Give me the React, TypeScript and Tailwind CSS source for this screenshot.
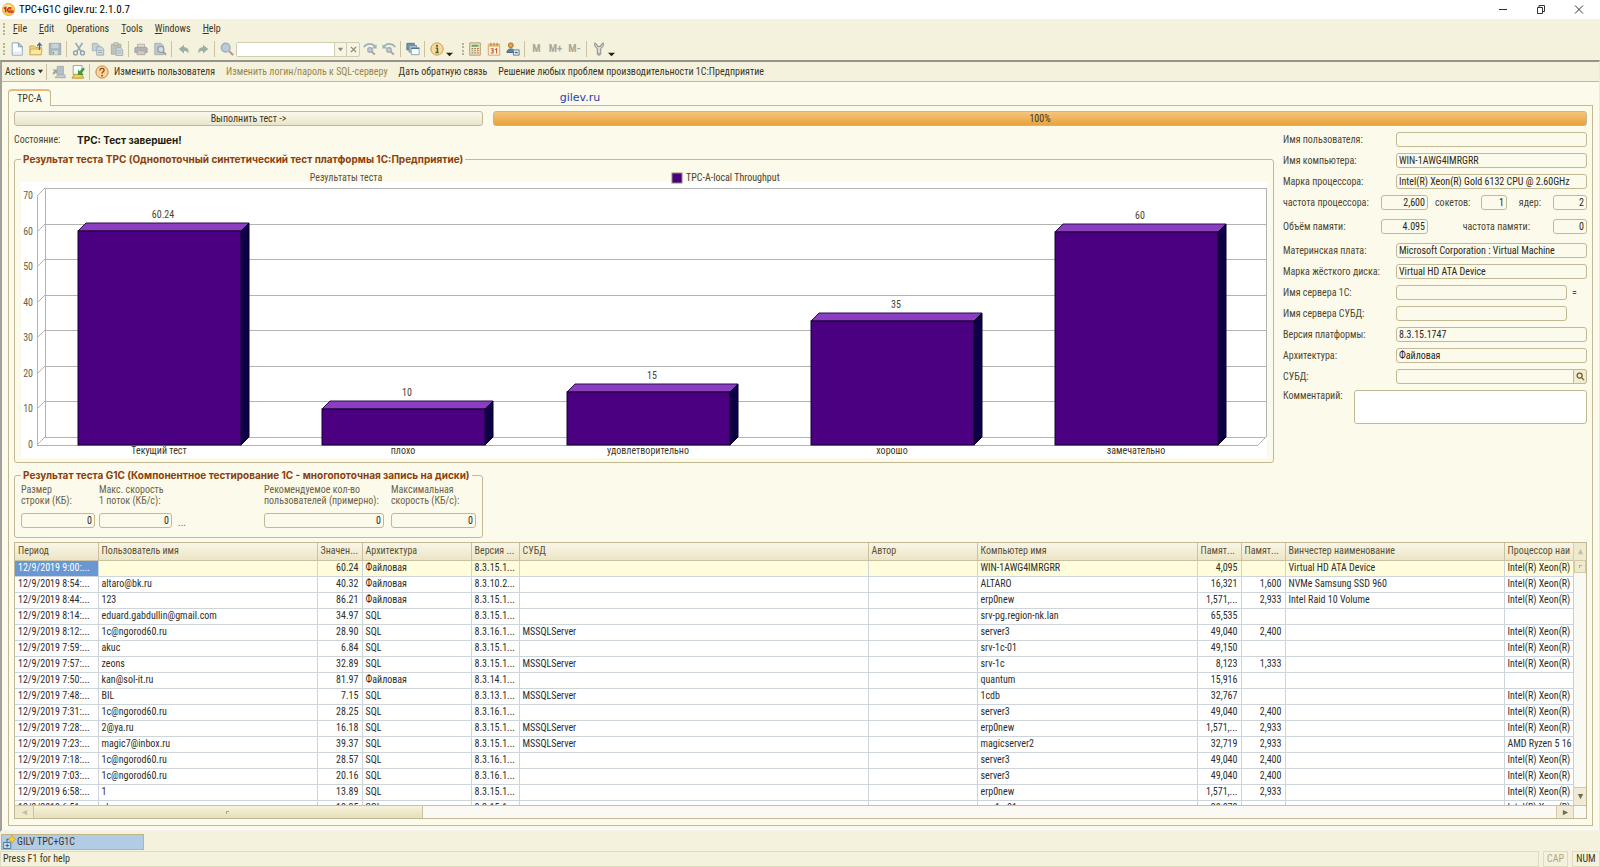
import React from 'react';

interface Bar {
  label: string;
  value: number;
}

interface Row {
  period: string;
  user: string;
  value: string;
  arch: string;
  version: string;
  dbms: string;
  computer: string;
  memory: string;
  memoryFreq: string;
  disk: string;
  cpu: string;
}

const bars: Bar[] = [
  { label: 'Текущий тест', value: 60.24 },
  { label: 'плохо', value: 10 },
  { label: 'удовлетворительно', value: 15 },
  { label: 'хорошо', value: 35 },
  { label: 'замечательно', value: 60 },
];

const ticks = [0, 10, 20, 30, 40, 50, 60, 70];

const XEON = 'Intel(R) Xeon(R)';

const makeRow = (
  period: string, user: string, value: string, arch: string, version: string, dbms: string,
  computer: string, memory: string, memoryFreq: string, disk: string, cpu: string
): Row => ({ period, user, value, arch, version, dbms, computer, memory, memoryFreq, disk, cpu });

const rows: Row[] = [
  makeRow('12/9/2019 9:00:...', '', '60.24', 'Файловая', '8.3.15.1...', '', 'WIN-1AWG4IMRGRR', '4,095', '', 'Virtual HD ATA Device', XEON),
  makeRow('12/9/2019 8:54:...', 'altaro@bk.ru', '40.32', 'Файловая', '8.3.10.2...', '', 'ALTARO', '16,321', '1,600', 'NVMe Samsung SSD 960', XEON),
  makeRow('12/9/2019 8:44:...', '123', '86.21', 'Файловая', '8.3.15.1...', '', 'erp0new', '1,571,...', '2,933', 'Intel Raid 10 Volume', XEON),
  makeRow('12/9/2019 8:14:...', 'eduard.gabdullin@gmail.com', '34.97', 'SQL', '8.3.15.1...', '', 'srv-pg.region-nk.lan', '65,535', '', '', ''),
  makeRow('12/9/2019 8:12:...', '1c@ngorod60.ru', '28.90', 'SQL', '8.3.16.1...', 'MSSQLServer', 'server3', '49,040', '2,400', '', XEON),
  makeRow('12/9/2019 7:59:...', 'akuc', '6.84', 'SQL', '8.3.15.1...', '', 'srv-1c-01', '49,150', '', '', XEON),
  makeRow('12/9/2019 7:57:...', 'zeons', '32.89', 'SQL', '8.3.15.1...', 'MSSQLServer', 'srv-1c', '8,123', '1,333', '', XEON),
  makeRow('12/9/2019 7:50:...', 'kan@sol-it.ru', '81.97', 'Файловая', '8.3.14.1...', '', 'quantum', '15,916', '', '', ''),
  makeRow('12/9/2019 7:48:...', 'BIL', '7.15', 'SQL', '8.3.13.1...', 'MSSQLServer', '1cdb', '32,767', '', '', XEON),
  makeRow('12/9/2019 7:31:...', '1c@ngorod60.ru', '28.25', 'SQL', '8.3.16.1...', '', 'server3', '49,040', '2,400', '', XEON),
  makeRow('12/9/2019 7:28:...', '2@ya.ru', '16.18', 'SQL', '8.3.15.1...', 'MSSQLServer', 'erp0new', '1,571,...', '2,933', '', XEON),
  makeRow('12/9/2019 7:23:...', 'magic7@inbox.ru', '39.37', 'SQL', '8.3.15.1...', 'MSSQLServer', 'magicserver2', '32,719', '2,933', '', 'AMD Ryzen 5 16'),
  makeRow('12/9/2019 7:18:...', '1c@ngorod60.ru', '28.57', 'SQL', '8.3.16.1...', '', 'server3', '49,040', '2,400', '', XEON),
  makeRow('12/9/2019 7:03:...', '1c@ngorod60.ru', '20.16', 'SQL', '8.3.16.1...', '', 'server3', '49,040', '2,400', '', XEON),
  makeRow('12/9/2019 6:58:...', '1', '13.89', 'SQL', '8.3.15.1...', '', 'erp0new', '1,571,...', '2,933', '', XEON),
  makeRow('12/9/2019 6:51:...', 'akuc', '18.35', 'SQL', '8.3.15.1...', '', 'srv-1c-01', '20,878', '', '', XEON),
];

const fieldClass =
  'h-[15px] min-w-0 rounded-[3px] border border-[#c1b993] bg-[#fcfaeb] px-[2px] text-[#2b2718] outline-none';

/* ---------- icons ---------- */

function Svg({ children, size = 14 }: { children: React.ReactNode; size?: number }) {
  return (
    <svg width={size} height={size} viewBox="0 0 16 16" fill="none" aria-hidden="true" className="shrink-0">
      {children}
    </svg>
  );
}

function LogoIcon() {
  return (
    <svg width="13" height="13" viewBox="0 0 16 16" fill="none" aria-hidden="true" className="shrink-0">
      <circle cx="8" cy="8" r="7.5" fill="#f9cf4e" stroke="#e0a63c" />
      <ellipse cx="7" cy="4.5" rx="4.5" ry="2.5" fill="#fdeeb0" />
      <path d="M2.5 7L4.5 5.5V11.5" stroke="#d2231c" strokeWidth="1.8" />
      <path d="M11.5 6.8A2.6 2.6 0 1 0 9.6 11H14.5" stroke="#d2231c" strokeWidth="1.7" />
      <path d="M10.3 8.2A1 1 0 1 0 9.6 9.2H14" stroke="#d2231c" strokeWidth="0.8" />
    </svg>
  );
}

const NewIcon = () => (
  <Svg>
    <path d="M2.5 1H9.5L14 5.5V15H2.5Z" fill="#fff" stroke="#7d9cb8" />
    <path d="M9.5 1V5.5H14Z" fill="#b9d3e8" stroke="#7d9cb8" />
    <path d="M3.5 11H13V14.3H3.5Z" fill="#e2eef7" />
  </Svg>
);

const OpenIcon = () => (
  <Svg>
    <path d="M1 4.5H6L7.5 6H14V14.5H1Z" fill="#f3d27a" stroke="#c9a24c" />
    <path d="M2 8H15L13.8 14.5H1Z" fill="#fbe6a6" stroke="#d0ab55" />
    <path d="M12 9V2M9.5 4.5L12 1.5L14.5 4.5" stroke="#3d688c" strokeWidth="1.4" />
  </Svg>
);

const SaveIcon = () => (
  <Svg>
    <path d="M1.5 1.5H14.5V14.5H1.5Z" fill="#a9b8c0" stroke="#94a5af" />
    <path d="M4 2H12V7H4Z" fill="#c5d2d8" />
    <path d="M4.5 10H11.5V14.5H4.5Z" fill="#d3d9d6" />
    <path d="M6 11V14" stroke="#8194a0" strokeWidth="1.5" />
  </Svg>
);

const CutIcon = () => (
  <Svg>
    <path d="M4 1L10.5 11M12 1L5.5 11" stroke="#97aab6" strokeWidth="2" />
    <circle cx="4" cy="12.5" r="2.2" stroke="#8ba2b5" strokeWidth="1.6" />
    <circle cx="12" cy="12.5" r="2.2" stroke="#8ba2b5" strokeWidth="1.6" />
  </Svg>
);

const CopyIcon = () => (
  <Svg>
    <path d="M1.5 1.5H7L9.5 4V10H1.5Z" fill="#c3d0d6" stroke="#a3b3bd" />
    <path d="M6.5 5.5H12L14.5 8V15H6.5Z" fill="#ccd8dd" stroke="#9badb8" />
    <path d="M8 9.5H13M8 12H13" stroke="#9badb8" />
  </Svg>
);

const PasteIcon = () => (
  <Svg>
    <path d="M1.5 2.5H12.5V14H1.5Z" fill="#c0c3b7" stroke="#aaae9f" />
    <path d="M4.5 1H9.5V4H4.5Z" fill="#d6d6c8" stroke="#a3a699" />
    <path d="M7 6.5H12L14.5 9V15.5H7Z" fill="#cfd9dc" stroke="#9babb4" />
    <path d="M8.5 10H13M8.5 12.5H13" stroke="#9babb4" />
  </Svg>
);

const PrintIcon = () => (
  <Svg>
    <path d="M4 2.5H12V7H4Z" fill="#dcdcd2" stroke="#b0b0a9" />
    <path d="M1 7C1 6.5 2 6 3 6H13C14 6 15 6.5 15 7V12H1Z" fill="#b1b5b8" stroke="#9b9fa3" />
    <path d="M3.5 10H12.5V14.5H3.5Z" fill="#d4c9bd" stroke="#aaa39d" />
  </Svg>
);

const PreviewIcon = () => (
  <Svg>
    <path d="M2 1.5H9L12 4.5V14.5H2Z" fill="#bcc8ce" stroke="#a2b0b8" />
    <circle cx="9" cy="8.5" r="3.5" fill="#cfdde4" stroke="#999ea3" strokeWidth="1.4" />
    <path d="M11.5 11L15 14.8" stroke="#b0978d" strokeWidth="2" />
  </Svg>
);

const UndoIcon = () => (
  <Svg>
    <path d="M2 8L8 3V6C12 6 14 8.5 13 13C12 11 11 10.3 8 10.3V13Z" fill="#9bb0a3" />
  </Svg>
);

const RedoIcon = () => (
  <Svg>
    <path d="M14 8L8 3V6C4 6 2 8.5 3 13C4 11 5 10.3 8 10.3V13Z" fill="#9bb0a3" />
  </Svg>
);

const FindIcon = () => (
  <Svg>
    <circle cx="6.5" cy="6.5" r="5" fill="#bccbd8" stroke="#9fafbd" strokeWidth="1.6" />
    <path d="M10.5 10.5L15 15" stroke="#b09a91" strokeWidth="2.4" />
  </Svg>
);

function FindStepIcon({ flip = false }: { flip?: boolean }) {
  return (
    <Svg>
      <g transform={flip ? 'matrix(-1 0 0 1 16 0)' : undefined}>
        <path d="M1 6C3 1.5 11 1 13 5" stroke="#9ab1c0" strokeWidth="2" />
        <path d="M15.5 2.5V7.5H10Z" fill="#9ab1c0" />
      </g>
      <circle cx="8" cy="9" r="2.6" fill="#c3cbd4" stroke="#9fa9b4" strokeWidth="1.3" />
      <path d="M10 11L13.5 14.5" stroke="#b09a91" strokeWidth="2" />
    </Svg>
  );
}

const WindowsIcon = () => (
  <Svg>
    <path d="M1 1.5H9.5V9H1Z" fill="#6f93ac" stroke="#4d748f" />
    <path d="M3.5 4H12V11.5H3.5Z" fill="#a8c3d5" stroke="#6d8fa7" />
    <path d="M6 6.5H15V14.5H6Z" fill="#fff" stroke="#7f9db3" />
    <path d="M6 7.3H15" stroke="#4d748f" strokeWidth="1.4" />
  </Svg>
);

const InfoIcon = () => (
  <Svg>
    <circle cx="8" cy="8" r="7" fill="#f9d99c" stroke="#c98f3d" />
    <circle cx="8" cy="4.3" r="1.3" fill="#3d6b3a" />
    <path d="M6.5 7H8.5V12M6.2 12H10" stroke="#3d6b3a" strokeWidth="1.7" />
  </Svg>
);

const HelpIcon = () => (
  <Svg>
    <circle cx="8" cy="8" r="7" fill="#fbd39a" stroke="#c07a35" />
    <path d="M5.6 6.2C5.6 2.9 10.6 3.2 10.4 6C10.3 7.6 8 7.8 8 9.8" stroke="#8a4a1c" strokeWidth="1.5" />
    <circle cx="8" cy="12.2" r="1" fill="#8a4a1c" />
  </Svg>
);

const CalculatorIcon = () => (
  <Svg>
    <path d="M2 1H14V15H2Z" fill="#f7ebc6" stroke="#a58f5a" />
    <path d="M4 3H12V5.5H4Z" fill="#6fa36a" />
    <path d="M4 7.5H6M7 7.5H9M4 10H6M7 10H9M4 12.5H6M7 12.5H9" stroke="#8f8569" strokeWidth="1.4" />
    <path d="M10.2 7.5H12.2M10.2 10H12.2M10.2 12.5H12.2" stroke="#cc5f36" strokeWidth="1.4" />
  </Svg>
);

const CalendarIcon = () => (
  <Svg>
    <path d="M1.5 2.5H14.5V15H1.5Z" fill="#fff7e4" stroke="#cf9c5f" />
    <path d="M1.5 2.5H14.5V5.5H1.5Z" fill="#eeb873" />
    <path d="M4.5 1V4M8 1V4M11.5 1V4" stroke="#8f6b3b" />
    <path d="M4.2 7.6H7V12.6H4.2M5 10H7M9.3 8.7L11 7.6V13.2" stroke="#d4502a" strokeWidth="1.2" />
  </Svg>
);

const UsersIcon = () => (
  <Svg>
    <circle cx="5.5" cy="3.8" r="2.8" fill="#e6a444" stroke="#9c6a22" />
    <path d="M1 12C1 6.5 10 6.5 10 12Z" fill="#5c86a8" stroke="#3d617e" />
    <path d="M8.5 9H15V15H8.5Z" fill="#e9f0f5" stroke="#4d748f" />
    <path d="M10 12H13.5" stroke="#4d748f" strokeWidth="1.6" />
  </Svg>
);

const WrenchIcon = () => (
  <Svg>
    <path d="M3.2 1V5L6 7.4V13.5C6 15.6 10 15.6 10 13.5V7.4L12.8 5V1L10 3.2V5H6V3.2Z" fill="#dcdcd6" stroke="#7c7c7c" />
    <circle cx="8" cy="13" r="0.8" fill="#777" />
  </Svg>
);

const GoBackIcon = () => (
  <Svg>
    <path d="M6 1.5H13V11H6Z" fill="#b4bfc8" stroke="#a2adb6" />
    <path d="M3.5 14.5L6.5 11H14.5L15.5 14.5Z" fill="#c3cbd0" stroke="#a2adb6" />
    <path d="M0.5 5H6V10.5L4.3 8.8L2 11L0.5 9.3L2.6 7Z" fill="#93aa98" />
  </Svg>
);

const GoToIcon = () => (
  <Svg>
    <path d="M2.5 0.5H12.5V11H2.5Z" fill="#fff" stroke="#7d9cb8" />
    <path d="M1 15L4 10.5H12L14.5 15Z" fill="#f5cf52" stroke="#b98f36" />
    <path d="M14.5 11.5H8V5L10 7L14 2.8L15.8 4.6L12.3 9Z" fill="#3f9b3a" />
  </Svg>
);

const TaskIcon = () => (
  <Svg>
    <path d="M1.5 8.5H10V15.5H1.5Z" fill="#b9dcf0" stroke="#3f6d92" />
    <path d="M5.7 8V5H9M4 12H8M6 10V14" stroke="#3f6d92" strokeWidth="1.2" />
    <path d="M11.5 0L13 3L16 4.5L13 6.5L11.5 9.5L10 6.5L7 4.5L10 3Z" fill="#f7cf2e" stroke="#d39f1c" strokeWidth="0.7" />
  </Svg>
);

const Triangle = ({ d }: { d: string }) => (
  <svg width="7" height="7" viewBox="0 0 8 8" aria-hidden="true">
    <path d={d} fill="currentColor" />
  </svg>
);

/* ---------- small parts ---------- */

function ToolButton({ label, children }: { label: string; children: React.ReactNode }) {
  return (
    <button type="button" aria-label={label} className="flex h-[18px] w-[19px] items-center justify-center">
      {children}
    </button>
  );
}

const Separator = () => <div className="mx-[2px] h-[16px] w-px bg-[#c9c3a4]" />;
const Grip = () => <div className="h-[12px] w-[3px] border-l-2 border-dotted border-[#b9b394]" />;
const Caret = () => (
  <span className="self-end text-[#2b1d12]">
    <Triangle d="M0 2H8L4 6Z" />
  </span>
);

function Group({ title, className, children }: { title: string; className?: string; children: React.ReactNode }) {
  return (
    <fieldset className={`min-w-0 rounded-[3px] border border-[#c1b993] ${className ?? ''}`}>
      <legend className="px-[2px] font-[Inter,sans-serif] text-[10px] leading-[10px] font-bold whitespace-nowrap text-[#8c3f0b]">
        {title}
      </legend>
      {children}
    </fieldset>
  );
}

function InfoRow({ id, label, value = '', extra, short = false, focused = false }: {
  id: string; label: string; value?: string; extra?: React.ReactNode; short?: boolean; focused?: boolean;
}) {
  return (
    <div className="flex h-[15px] items-center">
      <label htmlFor={id} className="w-[113px] shrink-0 text-[#4d462f]">{label}</label>
      <div className="flex flex-1 items-center">
        <input id={id} autoFocus={focused} defaultValue={value} className={`${fieldClass} ${short ? 'w-[171px]' : 'flex-1'}`} />
        {extra}
      </div>
    </div>
  );
}

/* ---------- chart ---------- */

function ThroughputChart() {
  const baseY = 277;
  const unit = 3.555;
  const depth = 8;
  const step = 244.25;
  return (
    <svg viewBox="0 0 1246 290" className="block w-full font-['Roboto_Condensed',Roboto,sans-serif] text-[10px]" role="img" aria-label="Результаты теста">
      <rect x="0" y="14" width="1246" height="276" fill="#fff" />
      <text x="325" y="13" textAnchor="middle" fill="#5c5236">Результаты теста</text>
      <rect x="651" y="5" width="10" height="10" fill="#4b0082" stroke="#8d8a70" />
      <text x="665" y="13" fill="#4a432b">TPC-A-local Throughput</text>
      <g stroke="#b3b3b3" fill="none" shapeRendering="crispEdges">
        {ticks.map((t) => {
          const y = Math.round(baseY - t * unit);
          return <path key={t} d={`M24 ${y - depth}H1245`} />;
        })}
        <path d={`M24 20V${baseY - depth}M1245 20V${baseY - depth}M16 28V${baseY}H1237`} />
      </g>
      <g stroke="#b3b3b3">
        {ticks.map((t) => {
          const y = Math.round(baseY - t * unit);
          return <path key={t} d={`M16 ${y}L24 ${y - depth}`} />;
        })}
        <path d={`M1237 ${baseY}L1245 ${baseY - depth}`} />
      </g>
      {ticks.map((t) => (
        <text key={t} x="12" y={Math.round(baseY - t * unit) + 3} textAnchor="end" fill="#6b6141">{t}</text>
      ))}
      {bars.map((bar, i) => {
        const x = Math.round(57 + i * step);
        const top = Math.round(baseY - bar.value * unit);
        return (
          <g key={bar.label}>
            <path d={`M${x} ${top}L${x + depth} ${top - depth}H${x + 171}L${x + 163} ${top}Z`} fill="#8b3fc0" stroke="#2b0a52" />
            <path d={`M${x + 163} ${top}L${x + 171} ${top - depth}V${baseY - depth}L${x + 163} ${baseY}Z`} fill="#0e0047" stroke="#05001f" />
            <rect x={x} y={top} width="163" height={baseY - top} fill="#4b0082" stroke="#14002e" />
            <text x={x + 85} y={top - 13} textAnchor="middle" fill="#4a432b">{bar.value}</text>
            <text x={x + 81} y="286" textAnchor="middle" fill="#3c361f">{bar.label}</text>
          </g>
        );
      })}
    </svg>
  );
}

/* ---------- results table ---------- */

const columns: { title: string; width?: string }[] = [
  { title: 'Период', width: 'w-[83px]' },
  { title: 'Пользователь имя', width: 'w-[219px]' },
  { title: 'Значен...', width: 'w-[45px]' },
  { title: 'Архитектура', width: 'w-[109px]' },
  { title: 'Версия ...', width: 'w-[48px]' },
  { title: 'СУБД' },
  { title: 'Автор', width: 'w-[109px]' },
  { title: 'Компьютер имя', width: 'w-[220px]' },
  { title: 'Памят...', width: 'w-[44px]' },
  { title: 'Памят...', width: 'w-[44px]' },
  { title: 'Винчестер наименование', width: 'w-[219px]' },
  { title: 'Процессор наи', width: 'w-[69px]' },
];

const numeric = [2, 8, 9];

function ResultsTable() {
  return (
    <div className="flex min-h-0 flex-1 flex-col border border-[#c1b993] bg-white">
      <div className="flex min-h-0 flex-1">
        <div className="min-w-0 flex-1 overflow-hidden">
          <table className="w-full table-fixed border-collapse">
            <thead>
              <tr className="h-[17px] bg-linear-to-b from-[#f9f6e6] to-[#ece5c6]">
                {columns.map((col, i) => (
                  <th
                    key={i}
                    className={`${col.width ?? ''} ${i === 11 ? 'pl-[3px]' : 'border-r px-[3px]'} border-b border-[#c9c1a0] text-left font-normal whitespace-nowrap text-[#5a5136]`}
                  >
                    {col.title}
                  </th>
                ))}
              </tr>
            </thead>
            <tbody>
              {rows.map((row, r) => {
                const cells = [
                  row.period, row.user, row.value, row.arch, row.version, row.dbms, '',
                  row.computer, row.memory, row.memoryFreq, row.disk, row.cpu,
                ];
                return (
                  <tr key={row.period} className={r === 0 ? 'h-[16px] bg-[#fffddc]' : 'h-[16px]'}>
                    {cells.map((cell, i) => (
                      <td
                        key={i}
                        className={`border-b border-[#cdd5da] whitespace-nowrap ${i === 11 ? 'pl-[3px]' : 'border-r px-[3px]'} ${numeric.includes(i) ? 'text-right' : ''} ${r === 0 && i === 0 ? 'bg-[#6a96d2] text-white' : 'text-[#2d2d2d]'}`}
                      >
                        {cell}
                      </td>
                    ))}
                  </tr>
                );
              })}
            </tbody>
          </table>
        </div>
        <div className="flex w-[13px] shrink-0 flex-col border-l border-[#d6cfb0] bg-[#faf9f4]">
          <button type="button" aria-label="Вверх" className="flex h-[17px] items-center justify-center bg-[#efe9cd] text-[#c3bda2]">
            <Triangle d="M1 7H7L4 1Z" />
          </button>
          <div className="flex h-[13px] items-center justify-center border border-[#d2caa8] bg-[#efe9cd]">
            <span className="size-[3px] border-t border-l border-[#b5ae90]" />
          </div>
          <button type="button" aria-label="Вниз" className="mt-auto flex h-[18px] items-center justify-center border-t border-[#d2caa8] bg-[#f0ebd2] text-[#6e6a5c]">
            <Triangle d="M1 1H7L4 7Z" />
          </button>
        </div>
      </div>
      <div className="flex h-[13px] shrink-0 border-t border-[#c9c1a0] bg-[#faf9f4] pr-[12px]">
        <button type="button" aria-label="Влево" className="flex w-[18px] items-center justify-center bg-[#efe9cd] text-[#c3bda2]">
          <Triangle d="M7 1V7L1 4Z" />
        </button>
        <div className="flex w-1/4 items-center justify-center border-x border-[#c9c1a0] bg-linear-to-b from-[#f7f3dc] to-[#e6dfb9]">
          <span className="size-[3px] border-t border-l border-[#a9a284]" />
        </div>
        <button type="button" aria-label="Вправо" className="ml-auto flex w-[18px] items-center justify-center border-x border-[#d2caa8] bg-[#f0ebd2] text-[#6e6a5c]">
          <Triangle d="M1 1V7L7 4Z" />
        </button>
      </div>
    </div>
  );
}

/* ---------- page ---------- */

const menu = [
  { key: 'F', rest: 'ile' },
  { key: 'E', rest: 'dit' },
  { key: 'O', rest: 'perations', plain: true },
  { key: 'T', rest: 'ools' },
  { key: 'W', rest: 'indows' },
  { key: 'H', rest: 'elp' },
];

export default function App() {
  return (
    <div className="flex h-screen flex-col bg-[#f4f1dc] font-['Roboto_Condensed',Roboto,sans-serif] text-[10px] leading-[12px] text-[#3c361f]">
      {/* Title bar */}
      <header className="flex h-[19px] shrink-0 items-center bg-white pl-[2px] text-black">
        <LogoIcon />
        <h1 className="ml-[4px] text-[11px] font-normal">TPC+G1C gilev.ru: 2.1.0.7</h1>
        <div className="ml-auto flex pr-[2px]">
          <button type="button" aria-label="Свернуть" className="flex w-[38px] items-center justify-center">
            <svg width="10" height="10" viewBox="0 0 10 10" stroke="#333"><path d="M1 4.5H9" /></svg>
          </button>
          <button type="button" aria-label="Развернуть" className="flex w-[38px] items-center justify-center">
            <svg width="10" height="10" viewBox="0 0 10 10" fill="none" stroke="#333"><path d="M1.5 2.5H6.5V8.5H1.5ZM3 2V0.5H8.5V6.5H7" /></svg>
          </button>
          <button type="button" aria-label="Закрыть" className="flex w-[38px] items-center justify-center">
            <svg width="10" height="10" viewBox="0 0 10 10" stroke="#333"><path d="M1 0.5L9 8.5M9 0.5L1 8.5" /></svg>
          </button>
        </div>
      </header>

      {/* Menu */}
      <nav className="flex h-[20px] shrink-0 items-center pl-[3px]">
        <Grip />
        <div className="ml-[7px] flex gap-[12px]">
          {menu.map((item) => (
            <button type="button" key={item.rest}>
              <span className={item.plain ? '' : 'underline'}>{item.key}</span>{item.rest}
            </button>
          ))}
        </div>
      </nav>

      {/* Toolbar */}
      <div className="flex h-[21px] shrink-0 items-center pb-px pl-[3px]">
        <Grip />
        <div className="ml-px flex items-center">
          <ToolButton label="Новый"><NewIcon /></ToolButton>
          <ToolButton label="Открыть"><OpenIcon /></ToolButton>
          <ToolButton label="Сохранить"><SaveIcon /></ToolButton>
          <Separator />
          <ToolButton label="Вырезать"><CutIcon /></ToolButton>
          <ToolButton label="Копировать"><CopyIcon /></ToolButton>
          <ToolButton label="Вставить"><PasteIcon /></ToolButton>
          <Separator />
          <ToolButton label="Печать"><PrintIcon /></ToolButton>
          <ToolButton label="Просмотр"><PreviewIcon /></ToolButton>
          <Separator />
          <ToolButton label="Отменить"><UndoIcon /></ToolButton>
          <ToolButton label="Вернуть"><RedoIcon /></ToolButton>
          <Separator />
          <ToolButton label="Найти"><FindIcon /></ToolButton>
          <div className="flex h-[15px] w-[124px] rounded-[2px] border border-[#d2ccb0] bg-[#f7f4e4] text-[#8e8975]">
            <input aria-label="Поиск" className="w-0 flex-1 bg-white outline-none" />
            <button type="button" aria-label="Список" className="flex w-[12px] items-center justify-center border-l border-[#d2ccb0]">
              <Triangle d="M1 2H7L4 6Z" />
            </button>
            <button type="button" aria-label="Очистить" className="flex w-[13px] items-center justify-center border-l border-[#d2ccb0]">
              <svg width="7" height="7" viewBox="0 0 8 8" stroke="currentColor" strokeWidth="1.5"><path d="M1 1L7 7M7 1L1 7" /></svg>
            </button>
          </div>
          <ToolButton label="Найти далее"><FindStepIcon /></ToolButton>
          <ToolButton label="Найти назад"><FindStepIcon flip /></ToolButton>
          <Separator />
          <ToolButton label="Окна"><WindowsIcon /></ToolButton>
          <Separator />
          <ToolButton label="Справка"><InfoIcon /></ToolButton>
          <Caret />
        </div>
        <div className="ml-[9px] flex items-center">
          <Grip />
          <ToolButton label="Калькулятор"><CalculatorIcon /></ToolButton>
          <ToolButton label="Календарь"><CalendarIcon /></ToolButton>
          <ToolButton label="Пользователи"><UsersIcon /></ToolButton>
          <Separator />
          <div className="flex text-[11px] font-bold text-[#aca79a]">
            <button type="button" className="w-[19px]">M</button>
            <button type="button" className="w-[19px]">M+</button>
            <button type="button" className="w-[19px]">M-</button>
          </div>
          <Separator />
          <ToolButton label="Сервис"><WrenchIcon /></ToolButton>
          <Caret />
        </div>
      </div>

      {/* Document window */}
      <main className="flex min-h-0 flex-1 flex-col border-t-2 border-r border-b-2 border-l-2 border-t-[#96938c] border-r-[#ebe8dc] border-b-[#f3f2ef] border-l-[#a3a09a] bg-[#fcfaeb]">
        <div className="flex h-[20px] shrink-0 items-center border-b border-[#c1b993] bg-[#f4f1dc] pl-[3px]">
          <button type="button" className="flex items-center gap-[2px]">
            Actions <Triangle d="M1 2H7L4 6Z" />
          </button>
          <Separator />
          <ToolButton label="Назад"><GoBackIcon /></ToolButton>
          <ToolButton label="Перейти"><GoToIcon /></ToolButton>
          <Separator />
          <ToolButton label="Помощь"><HelpIcon /></ToolButton>
          <div className="ml-[3px] flex gap-[11px]">
            <button type="button">Изменить пользователя</button>
            <button type="button" className="text-[#9a8648]">Изменить логин/пароль к SQL-серверу</button>
            <button type="button">Дать обратную связь</button>
            <button type="button">Решение любых проблем производительности 1С:Предприятие</button>
          </div>
        </div>

        <div className="flex min-h-0 flex-1 flex-col px-[6px] pt-[7px] pb-[4px]">
          <div className="flex h-[16px] shrink-0 items-end">
            <div className="z-10 -mb-px flex h-[17px] w-[43px] shrink-0 items-center justify-center rounded-t-[4px] border border-t-2 border-b-0 border-[#c1b993] border-t-[#eabb72] bg-[#fcfaeb]">
              TPC-A
            </div>
            <div className="flex flex-1 justify-center pr-[484px] pb-px">
              <a href="https://gilev.ru" className="font-['DejaVu_Sans',sans-serif] text-[11px] text-[#1f3fb0]">gilev.ru</a>
            </div>
          </div>

          <section className="flex min-h-0 flex-1 flex-col border border-[#c1b993] px-[5px] pt-[5px] pb-[6px]">
            <div className="flex h-[15px] shrink-0 gap-[10px]">
              <button type="button" className="w-[469px] shrink-0 rounded-[3px] border border-[#c1b993] bg-linear-to-b from-[#fbf9ec] to-[#e9e4cb] text-[10px] leading-[12px]">
                Выполнить тест -&gt;
              </button>
              <div role="progressbar" aria-valuenow={100} className="flex flex-1 items-center justify-center rounded-[3px] border border-[#c1b993] bg-linear-to-b from-[#f6c47a] to-[#e9a23b] leading-[12px]">
                100%
              </div>
            </div>

            <div className="mt-[6px] flex shrink-0 gap-[9px]">
              <div className="min-w-0 flex-1">
                <div className="flex h-[16px] items-center">
                  <span className="w-[63px] text-[#4d462f]">Состояние:</span>
                  <output className="font-[Inter,sans-serif] font-bold text-[#1d1a10]">TPC: Тест завершен!</output>
                </div>
                <Group title="Результат теста TPC (Однопоточный синтетический тест платформы 1С:Предприятие)" className="mt-[6px] px-[6px] pb-[4px]">
                  <div className="pt-[4px]"><ThroughputChart /></div>
                </Group>
              </div>

              <div className="flex w-[304px] shrink-0 flex-col gap-[6px] text-[#4d462f]">
                <InfoRow id="user" label="Имя пользователя:" focused />
                <InfoRow id="computer" label="Имя компьютера:" value="WIN-1AWG4IMRGRR" />
                <InfoRow id="cpu" label="Марка процессора:" value="Intel(R) Xeon(R) Gold 6132 CPU @ 2.60GHz" />
                <div className="flex h-[15px] items-center">
                  <label htmlFor="freq" className="w-[98px]">частота процессора:</label>
                  <input id="freq" defaultValue="2,600" className={`${fieldClass} w-[47px] text-right`} />
                  <label htmlFor="sockets" className="ml-[7px] w-[46px]">сокетов:</label>
                  <input id="sockets" defaultValue="1" className={`${fieldClass} w-[26px] text-right`} />
                  <label htmlFor="cores" className="ml-auto pr-[12px]">ядер:</label>
                  <input id="cores" defaultValue="2" className={`${fieldClass} w-[34px] text-right`} />
                </div>
                <div className="my-[3px] flex h-[15px] items-center">
                  <label htmlFor="mem" className="w-[98px]">Объём памяти:</label>
                  <input id="mem" defaultValue="4.095" className={`${fieldClass} w-[47px] text-right`} />
                  <label htmlFor="memfreq" className="ml-auto pr-[23px]">частота памяти:</label>
                  <input id="memfreq" defaultValue="0" className={`${fieldClass} w-[34px] text-right`} />
                </div>
                <InfoRow id="board" label="Материнская плата:" value="Microsoft Corporation : Virtual Machine" />
                <InfoRow id="disk" label="Марка жёсткого диска:" value="Virtual HD ATA Device" />
                <InfoRow id="server" label="Имя сервера 1С:" short extra={<span className="ml-[5px]">=</span>} />
                <InfoRow id="dbserver" label="Имя сервера СУБД:" short />
                <InfoRow id="version" label="Версия платформы:" value="8.3.15.1747" />
                <InfoRow id="arch" label="Архитектура:" value="Файловая" />
                <InfoRow
                  id="dbms"
                  label="СУБД:"
                  extra={
                    <button type="button" aria-label="Выбрать СУБД" className="-ml-[14px] flex h-[15px] w-[14px] items-center justify-center rounded-r-[3px] border border-[#c1b993] bg-[#f1ecd3]">
                      <svg width="9" height="9" viewBox="0 0 10 10" fill="none" stroke="#6b5a2c" strokeWidth="1.4"><circle cx="4" cy="4" r="2.8" /><path d="M6 6L9 9" /></svg>
                    </button>
                  }
                />
                <div className="flex items-start">
                  <label htmlFor="comment" className="w-[71px] shrink-0">Комментарий:</label>
                  <textarea id="comment" className="h-[34px] flex-1 resize-none rounded-[3px] border border-[#c1b993] bg-white outline-none" />
                </div>
              </div>
            </div>

            <Group title="Результат теста G1C (Компонентное тестирование 1С - многопоточная запись на диски)" className="mt-[7px] mb-[4px] w-[469px] shrink-0 px-[6px] pb-[9px]">
              <div className="flex items-end pt-[4px] leading-[11px] text-[#6b6247]">
                <div className="flex w-[74px] flex-col gap-[7px]">
                  <label htmlFor="rowsize">Размер<br />строки (КБ):</label>
                  <input id="rowsize" defaultValue="0" className={`${fieldClass} text-right`} />
                </div>
                <div className="ml-[4px] flex w-[73px] flex-col gap-[7px]">
                  <label htmlFor="maxone" className="whitespace-nowrap">Макс. скорость<br />1 поток (КБ/с):</label>
                  <input id="maxone" defaultValue="0" className={`${fieldClass} text-right`} />
                </div>
                <span className="ml-[6px]">...</span>
                <div className="ml-auto flex w-[120px] flex-col gap-[7px]">
                  <label htmlFor="reco" className="whitespace-nowrap">Рекомендуемое кол-во<br />пользователей (примерно):</label>
                  <input id="reco" defaultValue="0" className={`${fieldClass} text-right`} />
                </div>
                <div className="ml-[7px] flex w-[85px] flex-col gap-[7px]">
                  <label htmlFor="maxspeed" className="whitespace-nowrap">Максимальная<br />скорость (КБ/с):</label>
                  <input id="maxspeed" defaultValue="0" className={`${fieldClass} text-right`} />
                </div>
              </div>
            </Group>

            <ResultsTable />
          </section>
        </div>
      </main>

      {/* Window list */}
      <div className="flex h-[19px] shrink-0 items-center pl-px">
        <button type="button" className="flex h-[16px] w-[143px] items-center gap-px border border-[#c0b488] bg-[#b2cce6]">
          <TaskIcon /> GILV TPC+G1C
        </button>
      </div>

      {/* Status bar */}
      <footer className="flex h-[16px] shrink-0 gap-[4px]">
        <div className="flex flex-1 items-center border border-[#dfdbc0] pl-[2px]">Press F1 for help</div>
        <div className="flex w-[25px] items-center justify-center border border-[#dfdbc0] text-[#b5a67c]">CAP</div>
        <div className="flex w-[28px] items-center justify-center border border-[#dfdbc0]">NUM</div>
      </footer>
    </div>
  );
}
